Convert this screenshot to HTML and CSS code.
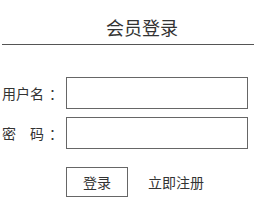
FILE: index.html
```html
<!DOCTYPE html>
<html lang="zh-CN">
<head>
  <meta charset="UTF-8">
  <title>会员登录</title>
  <link rel="stylesheet" href="styles.css">
</head>
<body>
  <div class="title">会员登录</div>
  <form class="login-form">
    <div class="row">
      <label for="username">用户名<span class="colon">：</span></label>
      <input type="text" id="username">
    </div>
    <div class="row">
      <label for="password">密　码<span class="colon">：</span></label>
      <input type="password" id="password">
    </div>
    <div class="actions">
      <button type="button" class="btn">登录</button>
      <a href="#" class="reg">立即注册</a>
    </div>
  </form>
</body>
</html>
```
FILE: styles.css
```css
body {
  margin: 0;
  background: #fff;
  color: #333;
  font-family: "Noto Sans CJK SC", "Liberation Sans", sans-serif;
  font-size: 14px;
}
.title {
  margin-left: 2px;
  padding: 15px 0 4px 28px;
  line-height: 25px;
  font-size: 18px;
  text-align: center;
  border-bottom: 1px solid #555;
}
.login-form {
  margin-top: 32px;
}
.row {
  display: flex;
  align-items: center;
  margin-bottom: 8px;
}
.row label {
  width: 64px;
  padding-left: 2px;
  white-space: nowrap;
}
.colon {
  margin-left: 5px;
}
.row input {
  width: 182px;
  height: 32px;
  box-sizing: border-box;
  border: 1px solid #666;
  margin: 0;
  padding: 0 6px;
  font-size: 14px;
}
.actions {
  display: flex;
  align-items: center;
  gap: 20px;
  padding-left: 66px;
  margin-top: 18px;
}
.btn {
  width: 62px;
  height: 30px;
  border: 1px solid #666;
  background: #fff;
  color: #333;
  font-family: inherit;
  font-size: 14px;
  padding: 0;
}
.reg {
  color: #333;
  text-decoration: none;
}
```
